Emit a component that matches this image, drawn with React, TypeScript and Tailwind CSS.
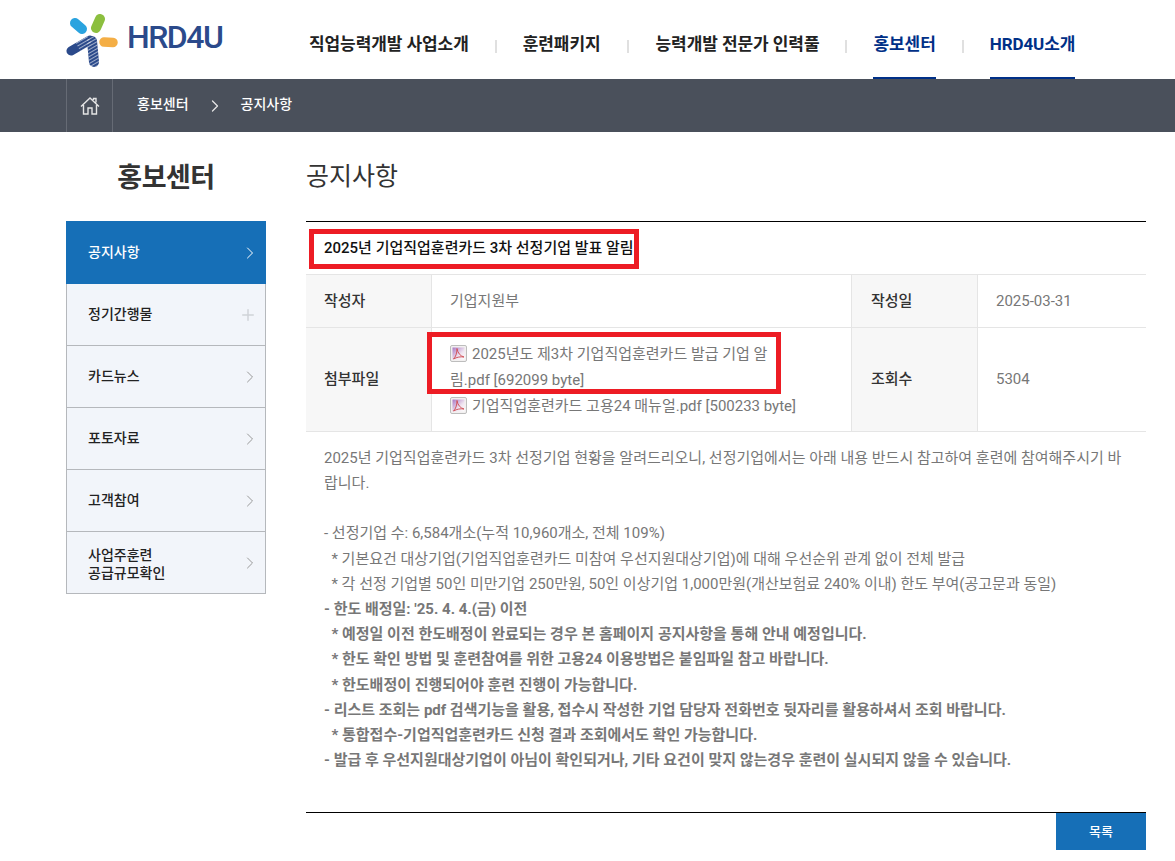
/**
 * HRD4U notice detail page
 */
import { ChevronRight, Plus } from "lucide-react";

const font = "font-['Roboto','Noto_Sans_CJK_KR',sans-serif]";

const navItems = [
  { label: "직업능력개발 사업소개", active: false },
  { label: "훈련패키지", active: false },
  { label: "능력개발 전문가 인력풀", active: false },
  { label: "홍보센터", active: true },
  { label: "HRD4U소개", active: true },
];

const sideItems = [
  { label: "정기간행물", plus: true },
  { label: "카드뉴스" },
  { label: "포토자료" },
  { label: "고객참여" },
];

const Logo = () => (
  <svg width="54" height="54" viewBox="0 0 54 54" className="shrink-0">
    <defs>
      <pattern id="hatch" width="3" height="3" patternUnits="userSpaceOnUse" patternTransform="rotate(-30)">
        <rect width="3" height="1" fill="#ffffff" opacity="0.55" />
      </pattern>
    </defs>
    <g strokeLinecap="round" fill="none">
      <line x1="9" y1="9" x2="16" y2="15" stroke="#2aa3df" strokeWidth="10" />
      <line x1="34" y1="5" x2="30" y2="14" stroke="#8cbf3f" strokeWidth="10" />
      <line x1="38" y1="28" x2="47" y2="28.500" stroke="#f4ae45" strokeWidth="9.500" />
      <line x1="24" y1="26" x2="5" y2="37" stroke="#2b4a8b" strokeWidth="9" />
      <line x1="26" y1="27" x2="28" y2="48" stroke="#2b4a8b" strokeWidth="10" />
      <line x1="24" y1="26" x2="12" y2="33" stroke="url(#hatch)" strokeWidth="9" strokeLinecap="butt" />
      <line x1="26" y1="27" x2="28" y2="48" stroke="url(#hatch)" strokeWidth="10" />
    </g>
  </svg>
);

const PdfIcon = () => (
  <svg width="17" height="17" viewBox="0 0 17 17" className="shrink-0 inline-block align-[-3px] mr-[5px]">
    <defs>
      <linearGradient id="pdfBg" x1="0" y1="0" x2="1" y2="1">
        <stop offset="0" stopColor="#a877c4" />
        <stop offset="0.6" stopColor="#efe4f0" />
        <stop offset="1" stopColor="#ffffff" />
      </linearGradient>
    </defs>
    <rect x="0.5" y="0.5" width="16" height="16" rx="1.5" fill="#f2f0f0" stroke="#bdbdbd" />
    <rect x="2.500" y="2.500" width="12" height="12" fill="url(#pdfBg)" />
    <path d="M3.500 14c2-2 3.500-5.500 3.500-10.500.5 4 3 7.500 7 8.500-3.500-.5-7 0-10.500 2z" fill="none" stroke="#d2545c" strokeWidth="1" />
  </svg>
);

export default function App() {
  return (
    <div className={`${font} w-[1175px] bg-white overflow-hidden h-[861px]`}>
      {/* Header */}
      <header className="h-[79px] flex pl-[66px]">
        <div className="flex items-start pt-[14px] w-[243px] gap-[7px]">
          <Logo />
          <span className="text-[32px] leading-[46px] font-medium text-[#2b4a8b] tracking-[-1.500px]">HRD4U</span>
        </div>
        <nav className="flex">
          <NavLink label={navItems[0].label} />
          <Sep w="w-[54px]" />
          <NavLink label={navItems[1].label} />
          <Sep w="w-[55px]" />
          <NavLink label={navItems[2].label} />
          <Sep w="w-[54px]" />
          <NavLink label={navItems[3].label} active />
          <Sep w="w-[54px]" />
          <NavLink label={navItems[4].label} active />
        </nav>
      </header>

      {/* Breadcrumb */}
      <div className="h-[53px] bg-[#4a505b] flex items-center pl-[66px] text-white text-[14px] font-medium">
        <div className="w-[47px] h-full border-x border-[#666b75] flex items-center justify-center">
          <svg width="20" height="20" viewBox="0 0 20 20" fill="none" stroke="#e5e5e5" strokeWidth="1.400">
            <path d="M1 10.500 10 2l9 8.500M3.500 9v9h4.500v-6h4v6h4.500V9M13.500 4V2.500h2.500v4" />
          </svg>
        </div>
        <span className="ml-[24px] mb-[3px]">홍보센터</span>
        <ChevronRight size={20} strokeWidth={1.500} className="mx-[16px] text-[#e5e5e5]" />
        <span className="mb-[3px]">공지사항</span>
      </div>

      <div className="flex pl-[66px] pt-[24px]">
        {/* Side menu */}
        <aside className="w-[200px] shrink-0">
          <h2 className="text-[27px] leading-[44px] font-bold text-[#333] text-center tracking-[-0.500px]">홍보센터</h2>
          <ul className="mt-[21px] text-[14px] font-medium text-[#222]">
            <li className="h-[63px] bg-[#166fb7] text-white flex items-center justify-between pl-[22px] pr-[6px]">
              <span>공지사항</span> <ChevronRight size={20} strokeWidth={1.200} />
            </li>
            {sideItems.map((it) => (
              <li key={it.label} className={`h-[62px] bg-[#f2f5fa] border-x border-b border-[#b5b8bc] flex items-center justify-between pl-[21px] ${it.plus ? "pr-[8px]" : "pr-[5px]"}`}>
                <span>{it.label}</span>
                {it.plus ? <Plus size={18} strokeWidth={2} className="text-[#d0d3d8]" /> : <ChevronRight size={20} strokeWidth={1.200} className="text-[#999]" />}
              </li>
            ))}
            <li className="h-[62px] bg-[#f2f5fa] border-x border-b border-[#b5b8bc] flex items-center justify-between pl-[21px] pr-[5px] leading-[18px]">
              <span className="mt-[2px]">사업주훈련<br />공급규모확인</span>
              <ChevronRight size={20} strokeWidth={1.200} className="text-[#999]" />
            </li>
          </ul>
        </aside>

        {/* Content */}
        <main className="w-[840px] ml-[40px]">
          <h1 className="text-[25px] leading-[42px] text-[#333]">공지사항</h1>
          <div className="mt-[23px] border-t border-black">
            <div className="h-[53px] flex items-center pl-[18px] border-b border-[#e5e5e5] relative text-[15px] font-medium text-[#111]">
              2025년 기업직업훈련카드 3차 선정기업 발표 알림
              <div className="absolute left-[3px] top-[7px] w-[330px] h-[40px] border-[5px] border-[#ed1c24]" />
            </div>
            <div className="h-[53px] flex border-b border-[#e5e5e5] text-[15px]">
              <div className="w-[126px] bg-[#f7f7f7] border-r border-[#e5e5e5] flex items-center pl-[18px] font-medium text-[#333]">작성자</div>
              <div className="w-[419px] flex items-center pl-[18px] text-[#777]">기업지원부</div>
              <div className="w-[127px] bg-[#f7f7f7] border-x border-[#e5e5e5] flex items-center pl-[19px] font-medium text-[#333]">작성일</div>
              <div className="flex-1 flex items-center pl-[18px] text-[#777]">2025-03-31</div>
            </div>
            <div className="h-[104px] flex border-b border-[#e5e5e5] text-[15px]">
              <div className="w-[126px] bg-[#f7f7f7] border-r border-[#e5e5e5] flex items-center pl-[18px] font-medium text-[#333]">첨부파일</div>
              <div className="w-[419px] relative pl-[18px] pr-[53px] py-[13px] text-[#777] leading-[26px]">
                <div><PdfIcon />2025년도 제3차 기업직업훈련카드 발급 기업 알림.pdf [692099 byte]</div>
                <div className="whitespace-nowrap"><PdfIcon />기업직업훈련카드 고용24 매뉴얼.pdf [500233 byte]</div>
                <div className="absolute left-[-5px] top-[4px] w-[354px] h-[62px] border-[5px] border-[#ed1c24]" />
              </div>
              <div className="w-[127px] bg-[#f7f7f7] border-x border-[#e5e5e5] flex items-center pl-[19px] font-medium text-[#333]">조회수</div>
              <div className="flex-1 flex items-center pl-[18px] text-[#777]">5304</div>
            </div>
            <div className="h-[381px] border-b border-black pl-[18px] pr-[20px] pt-[14px] text-[15px] leading-[25.200px] text-[#777]">
              <p>2025년 기업직업훈련카드 3차 선정기업 현황을 알려드리오니, 선정기업에서는 아래 내용 반드시 참고하여 훈련에 참여해주시기 바랍니다.</p>
              <p className="mt-[25px]">- 선정기업 수: 6,584개소(누적 10,960개소, 전체 109%)</p>
              <p>&nbsp; * 기본요건 대상기업(기업직업훈련카드 미참여 우선지원대상기업)에 대해 우선순위 관계 없이 전체 발급</p>
              <p>&nbsp; * 각 선정 기업별 50인 미만기업 250만원, 50인 이상기업 1,000만원(개산보험료 240% 이내) 한도 부여(공고문과 동일)</p>
              <div className="font-bold">
                <p>- 한도 배정일: '25. 4. 4.(금) 이전</p>
                <p>&nbsp; * 예정일 이전 한도배정이 완료되는 경우 본 홈페이지 공지사항을 통해 안내 예정입니다.</p>
                <p>&nbsp; * 한도 확인 방법 및 훈련참여를 위한 고용24 이용방법은 붙임파일 참고 바랍니다.</p>
                <p>&nbsp; * 한도배정이 진행되어야 훈련 진행이 가능합니다.</p>
                <p>- 리스트 조회는 pdf 검색기능을 활용, 접수시 작성한 기업 담당자 전화번호 뒷자리를 활용하셔서 조회 바랍니다.</p>
                <p>&nbsp; * 통합접수-기업직업훈련카드 신청 결과 조회에서도 확인 가능합니다.</p>
                <p>- 발급 후 우선지원대상기업이 아님이 확인되거나, 기타 요건이 맞지 않는경우 훈련이 실시되지 않을 수 있습니다.</p>
              </div>
            </div>
            <div className="flex justify-end">
              <button className="w-[90px] h-[37px] bg-[#166fb7] text-white text-[13px] font-medium">목록</button>
            </div>
          </div>
        </main>
      </div>
    </div>
  );
}

function NavLink({ label, active }: { label: string; active?: boolean }) {
  return (
    <a className={`h-[79px] flex items-center pt-[10px] whitespace-nowrap text-[17px] font-bold tracking-[-0.080px] ${active ? "text-[#003087] shadow-[inset_0_-2px_0_#003087]" : "text-[#222]"}`}>
      {label}
    </a>
  );
}

function Sep({ w }: { w: string }) {
  return (
    <div className={`${w} flex items-center justify-center pt-[13px]`}>
      <span className="block w-[2px] h-[13px] bg-[#e0e0e0]" />
    </div>
  );
}
